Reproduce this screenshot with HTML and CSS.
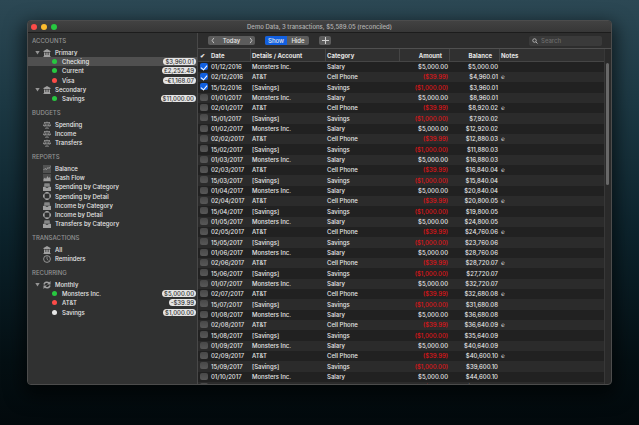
FILE: index.html
```
<!DOCTYPE html>
<html lang="en">
<head>
  <meta charset="UTF-8">
  <meta name="viewport" content="width=device-width, initial-scale=1.0">
  <title>Demo Data</title>
  <link rel="stylesheet" href="styles.css">
</head>
<body>
  <svg class="sprite" aria-hidden="true">
    <symbol id="bank" viewBox="0 0 16 16">
      <path d="M8 0L15 4V6H1V4ZM2 7H5V12H2ZM6.500 7H9.500V12H6.500ZM11 7H14V12H11ZM2 12H14V14H2ZM1 14H15V16H1Z"/>
    </symbol>
    <symbol id="scale" viewBox="0 0 16 16">
      <path fill="none" stroke="currentColor" stroke-width="1.3" d="M8 1V14M4 14.500H12M2 3H14M3.500 3L1 9M3.500 3L6 9M12.500 3L10 9M12.500 3L15 9M.5 9H6.500Q3.500 12.500 .5 9ZM9.500 9H15.500Q12.500 12.500 9.500 9Z"/>
    </symbol>
    <symbol id="chart" viewBox="0 0 16 16">
      <path opacity=".3" d="M0 0H16V16H0Z"/>
      <path fill="none" stroke="currentColor" stroke-width="1.800" d="M1 10L4 7L7 9L10 5L12 7L15 3"/>
    </symbol>
    <symbol id="bars" viewBox="0 0 16 16">
      <path opacity=".25" d="M0 0H16V16H0Z"/>
      <path d="M1 14V10L4 7L6 10L9 4L11 8L13 6L15 9V14Z"/>
    </symbol>
    <symbol id="tray" viewBox="0 0 16 16">
      <path opacity=".55" d="M3 0H13L15 9H1Z"/>
      <path d="M0 8H5L6 10H10L11 8H16V16H0ZM3 2H13V3H3ZM3 5H13V6H3Z"/>
    </symbol>
    <symbol id="detail" viewBox="0 0 16 16">
      <circle cx="8" cy="8" r="6.500" fill="none" stroke="currentColor" stroke-width="1.500"/>
      <path d="M0 5H3V11H0ZM13 5H16V11H13ZM5 0H11V3H5ZM5 13H11V16H5Z"/>
    </symbol>
    <symbol id="clock" viewBox="0 0 16 16">
      <circle cx="8" cy="8" r="6.800" fill="none" stroke="currentColor" stroke-width="1.800"/>
      <path fill="none" stroke="currentColor" stroke-width="1.500" d="M8 3V8L10.500 11"/>
    </symbol>
    <symbol id="repeat" viewBox="0 0 16 16">
      <path fill="none" stroke="currentColor" stroke-width="3" d="M2 7A6 6 0 0 1 12 4M14 9A6 6 0 0 1 4 12"/>
      <path d="M15 0V7H8ZM1 16V9H8Z"/>
    </symbol>
  </svg>

  <div class="window">
    <header class="titlebar">
      <div class="lights">
        <button class="light red" aria-label="Close"></button>
        <button class="light yellow" aria-label="Minimize"></button>
        <button class="light green" aria-label="Zoom"></button>
      </div>
      <h1>Demo Data, 3 transactions, $5,589.05 (reconciled)</h1>
    </header>

    <div class="content">
      <nav class="sidebar">
        <h2>ACCOUNTS</h2>
        <ul>
          <li><span class="arrow"></span><svg class="icon"><use href="#bank"/></svg><a href="#">Primary</a></li>
          <li class="child selected"><span class="dot green"></span><a href="#">Checking</a><span class="pill">$3,960.01</span></li>
          <li class="child"><span class="dot green"></span><a href="#">Current</a><span class="pill">£2,252.49</span></li>
          <li class="child"><span class="dot red"></span><a href="#">Visa</a><span class="pill">-€1,168.07</span></li>
          <li><span class="arrow"></span><svg class="icon"><use href="#bank"/></svg><a href="#">Secondary</a></li>
          <li class="child"><span class="dot green"></span><a href="#">Savings</a><span class="pill">$11,000.00</span></li>
        </ul>
        <h2>BUDGETS</h2>
        <ul>
          <li class="item"><svg class="icon"><use href="#scale"/></svg><a href="#">Spending</a></li>
          <li class="item"><svg class="icon"><use href="#scale"/></svg><a href="#">Income</a></li>
          <li class="item"><svg class="icon"><use href="#scale"/></svg><a href="#">Transfers</a></li>
        </ul>
        <h2>REPORTS</h2>
        <ul>
          <li class="item"><svg class="icon"><use href="#chart"/></svg><a href="#">Balance</a></li>
          <li class="item"><svg class="icon"><use href="#bars"/></svg><a href="#">Cash Flow</a></li>
          <li class="item"><svg class="icon"><use href="#tray"/></svg><a href="#">Spending by Category</a></li>
          <li class="item"><svg class="icon"><use href="#detail"/></svg><a href="#">Spending by Detail</a></li>
          <li class="item"><svg class="icon"><use href="#tray"/></svg><a href="#">Income by Category</a></li>
          <li class="item"><svg class="icon"><use href="#detail"/></svg><a href="#">Income by Detail</a></li>
          <li class="item"><svg class="icon"><use href="#tray"/></svg><a href="#">Transfers by Category</a></li>
        </ul>
        <h2>TRANSACTIONS</h2>
        <ul>
          <li class="item"><svg class="icon"><use href="#bank"/></svg><a href="#">All</a></li>
          <li class="item"><svg class="icon"><use href="#clock"/></svg><a href="#">Reminders</a></li>
        </ul>
        <h2>RECURRING</h2>
        <ul>
          <li><span class="arrow"></span><svg class="icon"><use href="#repeat"/></svg><a href="#">Monthly</a></li>
          <li class="child"><span class="dot green"></span><a href="#">Monsters Inc.</a><span class="pill">$5,000.00</span></li>
          <li class="child"><span class="dot red"></span><a href="#">AT&amp;T</a><span class="pill">-$39.99</span></li>
          <li class="child"><span class="dot white"></span><a href="#">Savings</a><span class="pill">$1,000.00</span></li>
        </ul>
      </nav>

      <main class="main">
        <div class="toolbar">
          <div class="segment">
            <button aria-label="Previous"><svg class="chevron" viewBox="0 0 4 8"><path d="M3 1L1 4L3 7"/></svg></button>
            <button class="today">Today</button>
            <button aria-label="Next"><svg class="chevron" viewBox="0 0 4 8"><path d="M1 1L3 4L1 7"/></svg></button>
          </div>
          <div class="segment toggle">
            <button class="active">Show</button>
            <button>Hide</button>
          </div>
          <div class="segment">
            <button class="add" aria-label="Add"><svg class="plus" viewBox="0 0 7 7"><path d="M3.500 0V7M0 3.500H7"/></svg></button>
          </div>
          <label class="search">
            <svg class="glass" viewBox="0 0 12 12"><circle cx="5" cy="5" r="3.500"/><path d="M8 8L11 11"/></svg>
            <input type="text" placeholder="Search" aria-label="Search">
          </label>
        </div>

        <div class="register">
          <table>
            <colgroup>
              <col class="col-check">
              <col class="col-date">
              <col class="col-details">
              <col class="col-category">
              <col class="col-money">
              <col class="col-money">
              <col>
            </colgroup>
            <thead>
              <tr>
                <th class="check">✔</th>
                <th class="date">Date</th>
                <th>Details / Account</th>
                <th>Category</th>
                <th class="money">Amount</th>
                <th class="money">Balance</th>
                <th>Notes</th>
              </tr>
            </thead>
            <tbody id="rows"></tbody>
          </table>
          <div class="scrollbar"><div class="thumb"></div></div>
        </div>
      </main>
    </div>
  </div>
  <script src="script.js"></script>
</body>
</html>
```

FILE: styles.css
```
* {
  box-sizing: border-box;
}
body {
  margin: 0;
  height: 100vh;
  padding: 20px 27px 40px;
  font-family: Inter, "Liberation Sans", sans-serif;
  font-size: 6px;
  font-weight: 500;
  line-height: 9px;
  color: #e6e6e6;
  background: linear-gradient(#2c4854, #1c3843 25%, #0c232c 55%, #040f13 85%, #02090c);
  overflow: hidden;
}
h1, h2, ul {
  margin: 0;
  padding: 0;
  font-size: 6px;
  font-weight: 500;
}
ul {
  list-style: none;
}
a {
  color: inherit;
  text-decoration: none;
}
button, input {
  margin: 0;
  padding: 0;
  border: none;
  background: none;
  color: inherit;
  font: inherit;
}
.sprite {
  display: none;
}
.window {
  display: flex;
  flex-direction: column;
  height: 100%;
  border: 1px solid #4c4c4c;
  border-radius: 4px;
  background: #2a2a2a;
  box-shadow: 0 7px 18px 4px rgba(0, 0, 0, 0.6);
  overflow: hidden;
}

/* title bar */
.titlebar {
  display: grid;
  grid-template-columns: 1fr auto 1fr;
  align-items: center;
  height: 12px;
  flex: none;
  padding: 0 3px;
  background: linear-gradient(#424242, #373737);
  border-bottom: 1px solid #1c1c1c;
}
.titlebar h1 {
  color: #b4b4b4;
}
.lights {
  display: flex;
  gap: 4px;
}
.light {
  width: 6px;
  height: 6px;
  border-radius: 50%;
}
.red {
  background: #fc4b48;
}
.yellow {
  background: #fdbc2e;
}
.green {
  background: #27c840;
}
.white {
  background: #e6e6e6;
}

.content {
  display: flex;
  flex: 1;
  min-height: 0;
}

/* sidebar */
.sidebar {
  flex: none;
  width: 170px;
  padding-top: 3px;
  background: #303131;
  border-right: 1px solid #484848;
  font-weight: 600;
}
.sidebar h2 {
  padding-left: 4px;
  color: #939393;
}
.sidebar ul {
  padding: 3px 0 5px;
}
.sidebar li {
  display: flex;
  align-items: center;
  height: 9px;
  padding: 0 1px 0 7px;
}
.sidebar li:nth-child(4n) {
  height: 10px;
}
.sidebar .child {
  padding-left: 24px;
}
.sidebar .item {
  padding-left: 15px;
}
.sidebar .selected {
  background: #505050;
}
.arrow {
  width: 5px;
  height: 4px;
  margin-right: 3px;
  background: #959595;
  clip-path: polygon(0 0, 100% 0, 50% 100%);
}
.icon {
  width: 8px;
  height: 8px;
  margin-right: 4px;
  fill: currentColor;
  color: #a0a0a0;
}
.dot {
  width: 5px;
  height: 5px;
  margin-right: 5px;
  border-radius: 50%;
}
.pill {
  margin-left: auto;
  padding: 0 2px;
  height: 7px;
  line-height: 7px;
  border-radius: 4px;
  background: #e4e4e4;
  color: #333;
}

/* toolbar */
.main {
  display: flex;
  flex-direction: column;
  flex: 1;
  min-width: 0;
}
.toolbar {
  display: flex;
  align-items: center;
  flex: none;
  gap: 10px;
  height: 16px;
  padding: 0 9px 0 10px;
  background: #2d2d2d;
  border-bottom: 1px solid #505050;
}
.segment {
  display: flex;
  height: 9px;
  border-radius: 2px;
  background: #5c5c5c;
  overflow: hidden;
}
.segment button {
  display: flex;
  align-items: center;
  justify-content: center;
  width: 9px;
  line-height: 9px;
}
.segment .today {
  width: 29px;
}
.segment.toggle button {
  width: 22px;
}
.segment .active {
  background: #1260e0;
}
.segment .add {
  width: 12px;
}
.chevron {
  width: 4px;
  height: 7px;
}
.plus {
  width: 7px;
  height: 7px;
}
.chevron path, .plus path, .glass * {
  fill: none;
  stroke: #d0d0d0;
}
.search {
  display: flex;
  align-items: center;
  gap: 3px;
  width: 73px;
  height: 10px;
  margin-left: auto;
  padding: 0 3px;
  border-radius: 2px;
  background: #3a3a3a;
}
.glass {
  flex: none;
  width: 6px;
  height: 6px;
}
.glass * {
  stroke-width: 2;
  stroke: #b0b0b0;
}
.search input {
  flex: 1;
  min-width: 0;
  outline: none;
}
.search input::placeholder {
  color: #6c6c6c;
}

/* register */
.register {
  display: flex;
  flex: 1;
  min-height: 0;
  overflow: hidden;
}
table {
  flex: 1;
  align-self: flex-start;
  table-layout: fixed;
  border-collapse: separate;
  border-spacing: 0;
  width: 0;
}
.col-check {
  width: 11px;
}
.col-date {
  width: 41px;
}
.col-details {
  width: 75px;
}
.col-category {
  width: 74px;
}
.col-money {
  width: 50px;
}
th, td {
  padding: 0 1px 0 2px;
  text-align: left;
  white-space: nowrap;
  overflow: hidden;
}
th {
  height: 13px;
  padding-left: 1px;
  background: #303030;
  border-left: 1px solid #454545;
  border-bottom: 1px solid #454545;
  font-weight: 700;
}
th.check, th.date {
  border-left-color: transparent;
}
td {
  height: 10px;
  line-height: 10px;
}
tbody tr:nth-child(3n) td {
  height: 11px;
}
tbody tr {
  background: #212121;
}
tbody tr:nth-child(even) {
  background: #2b2b2b;
}
.money {
  text-align: right;
}
th.money {
  padding-right: 7px;
}
.negative {
  color: #e01418;
}
td.check {
  vertical-align: top;
  padding-top: 1px;
}
.check input {
  appearance: none;
  display: grid;
  place-items: center;
  width: 8px;
  height: 7px;
  border-radius: 2px;
  background: linear-gradient(#484848, #585858);
}
.check input:checked {
  background: #1260e0;
}
.check input:checked::after {
  content: "";
  width: 3px;
  height: 5px;
  border: solid #fff;
  border-width: 0 1px 1px 0;
  transform: rotate(40deg);
}
.scrollbar {
  width: 7px;
  padding: 14px 2px 0 1px;
  border-left: 1px solid #383838;
}
.thumb {
  height: 122px;
  border-radius: 2px;
  background: #686868;
}
```

FILE: script.js
```
// The three transactions that repeat every month
const recurring = [
  { day: '01', details: 'Monsters Inc.', category: 'Salary', amount: 5000, note: '' },
  { day: '02', details: 'AT&amp;T', category: 'Cell Phone', amount: -39.99, note: '℮' },
  { day: '15', details: '[Savings]', category: 'Savings', amount: -1000, note: '' }
];

function money(value) {
  const text = '$' + Math.abs(value).toLocaleString('en-US', { minimumFractionDigits: 2, maximumFractionDigits: 2 });
  return value < 0 ? `(${text})` : text;
}

let balance = 0;
let html = '';

for (let i = 0; i < 32; i++) {
  const item = recurring[i % 3];
  const months = 11 + Math.floor(i / 3);
  const month = String(months % 12 + 1).padStart(2, '0');
  const year = 2016 + Math.floor(months / 12);
  const date = `${item.day}/${month}/${year}`;
  balance += item.amount;
  html += `<tr>
    <td class="check"><input type="checkbox" aria-label="Reconciled ${date}" ${i < 3 ? 'checked' : ''}></td>
    <td>${date}</td>
    <td>${item.details}</td>
    <td>${item.category}</td>
    <td class="money ${item.amount < 0 ? 'negative' : ''}">${money(item.amount)}</td>
    <td class="money">${money(balance)}</td>
    <td>${item.note}</td>
  </tr>`;
}

document.getElementById('rows').innerHTML = html;
```
